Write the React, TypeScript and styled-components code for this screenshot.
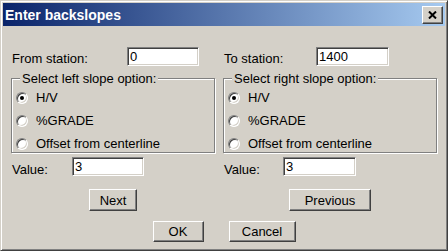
import styled, { createGlobalStyle } from "styled-components";

const GlobalStyle = createGlobalStyle`
  html, body {
    margin: 0;
    padding: 0;
    background: #d4d0c8;
  }
  body {
    font-family: "Liberation Sans", Arial, sans-serif;
    font-size: 13px;
    color: #000;
  }
`;

type Side = {
  station: string;
  stationValue: string;
  stationLabelW: number;
  group: string;
  valueLabelW: number;
  button: string;
  buttonW: number;
  inputW: number;
};

const sides: Side[] = [
  {
    station: "From station:",
    stationValue: "0",
    stationLabelW: 116,
    group: "Select left slope option:",
    valueLabelW: 61,
    button: "Next",
    buttonW: 48,
    inputW: 72,
  },
  {
    station: "To station:",
    stationValue: "1400",
    stationLabelW: 93,
    group: "Select right slope option:",
    valueLabelW: 60,
    button: "Previous",
    buttonW: 82,
    inputW: 73,
  },
];

const options = ["H/V", "%GRADE", "Offset from centerline"];

export default function App() {
  return (
    <>
      <GlobalStyle />
      <Window>
        <TitleBar>
          <span>Enter backslopes</span>
          <CloseButton>
            <svg width="9" height="8" viewBox="0 0 9 8">
              <path d="M1 0.5 L8 7.5 M8 0.5 L1 7.5" stroke="#000" strokeWidth="2" />
            </svg>
          </CloseButton>
        </TitleBar>

        <Body>
          <Columns>
            {sides.map((s) => (
              <Column key={s.group}>
                <FieldRow>
                  <Label $w={s.stationLabelW} $top={4}>{s.station}</Label>
                  <TextBox $w={s.inputW} defaultValue={s.stationValue} />
                </FieldRow>

                <Group>
                  <Legend>{s.group}</Legend>
                  {options.map((o, idx) => (
                    <RadioRow key={o}>
                      <Radio $checked={idx === 0} />
                      <span>{o}</span>
                    </RadioRow>
                  ))}
                </Group>

                <FieldRow $gap={4}>
                  <Label $w={s.valueLabelW} $top={5}>Value:</Label>
                  <TextBox $w={s.inputW} defaultValue="3" />
                </FieldRow>

                <ButtonRow>
                  <Button $w={s.buttonW} $h={22}>{s.button}</Button>
                </ButtonRow>
              </Column>
            ))}
          </Columns>

          <Footer>
            <Button $w={51} $h={21}>OK</Button>
            <Button $w={67} $h={21}>Cancel</Button>
          </Footer>
        </Body>
      </Window>
    </>
  );
}

//Styled Components
const Window = styled.div`
  width: 448px;
  height: 251px;
  box-sizing: border-box;
  display: flex;
  flex-direction: column;
  background: #d4d0c8;
  border: 1px solid;
  border-color: #d4d0c8 #404040 #404040 #d4d0c8;
  box-shadow: inset 1px 1px 0 #fff, inset -1px -1px 0 #808080;
  padding: 2px;
`;

const TitleBar = styled.div`
  height: 23px;
  flex-shrink: 0;
  display: flex;
  align-items: center;
  justify-content: space-between;
  padding: 0 2px;
  background: linear-gradient(to right, #0a246a, #a6caf0);
  color: #fff;
  font-size: 14px;
  font-weight: bold;
  line-height: 16px;
`;

const CloseButton = styled.span`
  width: 21px;
  height: 18px;
  box-sizing: border-box;
  display: flex;
  align-items: center;
  justify-content: center;
  background: #d4d0c8;
  border: 1px solid;
  border-color: #fff #404040 #404040 #fff;
  box-shadow: inset -1px -1px 0 #808080;
`;

const Body = styled.div`
  flex: 1;
  display: flex;
  flex-direction: column;
  padding: 21px 8px 0 8px;
`;

const Columns = styled.div`
  display: grid;
  grid-template-columns: 204px 214px;
  column-gap: 8px;
`;

const Column = styled.div`
  display: flex;
  flex-direction: column;
`;

const FieldRow = styled.div<{ $gap?: number }>`
  display: flex;
  align-items: flex-start;
  height: 19px;
  margin-top: ${(p) => p.$gap ?? 0}px;
`;

const Label = styled.span<{ $w: number; $top: number }>`
  width: ${(p) => p.$w}px;
  box-sizing: border-box;
  padding: ${(p) => p.$top}px 0 0 1px;
  line-height: 15px;
  white-space: nowrap;
`;

const TextBox = styled.input<{ $w: number }>`
  width: ${(p) => p.$w}px;
  height: 19px;
  box-sizing: border-box;
  margin: 0;
  padding: 0 2px;
  border: 1px solid;
  border-color: #808080 #fff #fff #808080;
  box-shadow: inset 1px 1px 0 #404040, inset -1px -1px 0 #d4d0c8;
  background: #fff;
  font-family: inherit;
  font-size: 13px;
  color: #000;
  outline: none;
`;

const Group = styled.fieldset`
  margin: 5px 0 0;
  padding: 4px 0 0 4px;
  min-width: 0;
  border: 1px solid #808080;
  box-shadow: inset 1px 1px 0 #fff, 1px 1px 0 #fff;
`;

const Legend = styled.legend`
  margin-left: 4px;
  padding: 0 2px;
  line-height: 15px;
  background: #d4d0c8;
`;

const RadioRow = styled.div`
  display: flex;
  align-items: center;
  gap: 8px;
  height: 16px;
  line-height: 16px;

  & + & {
    margin-top: 7px;
  }
`;

const Radio = styled.span<{ $checked?: boolean }>`
  position: relative;
  width: 12px;
  height: 12px;
  box-sizing: border-box;
  flex-shrink: 0;
  border-radius: 50%;
  background: #fff;
  border: 1px solid;
  border-color: #808080 #fff #fff #808080;
  box-shadow: inset 1px 1px 0 #404040, inset -1px -1px 0 #d4d0c8;

  &::after {
    content: "";
    display: ${(p) => (p.$checked ? "block" : "none")};
    position: absolute;
    left: 3px;
    top: 3px;
    width: 4px;
    height: 4px;
    border-radius: 50%;
    background: #000;
  }
`;

const ButtonRow = styled.div`
  display: flex;
  justify-content: center;
  margin-top: 13px;
`;

const Footer = styled.div`
  display: flex;
  justify-content: center;
  gap: 25px;
  margin-top: 10px;
`;

const Button = styled.button<{ $w: number; $h: number }>`
  width: ${(p) => p.$w}px;
  height: ${(p) => p.$h}px;
  box-sizing: border-box;
  margin: 0;
  padding: 0;
  background: #d4d0c8;
  border: 1px solid;
  border-color: #fff #404040 #404040 #fff;
  box-shadow: inset -1px -1px 0 #808080, inset 1px 1px 0 #d4d0c8;
  font-family: inherit;
  font-size: 13px;
  color: #000;
`;
